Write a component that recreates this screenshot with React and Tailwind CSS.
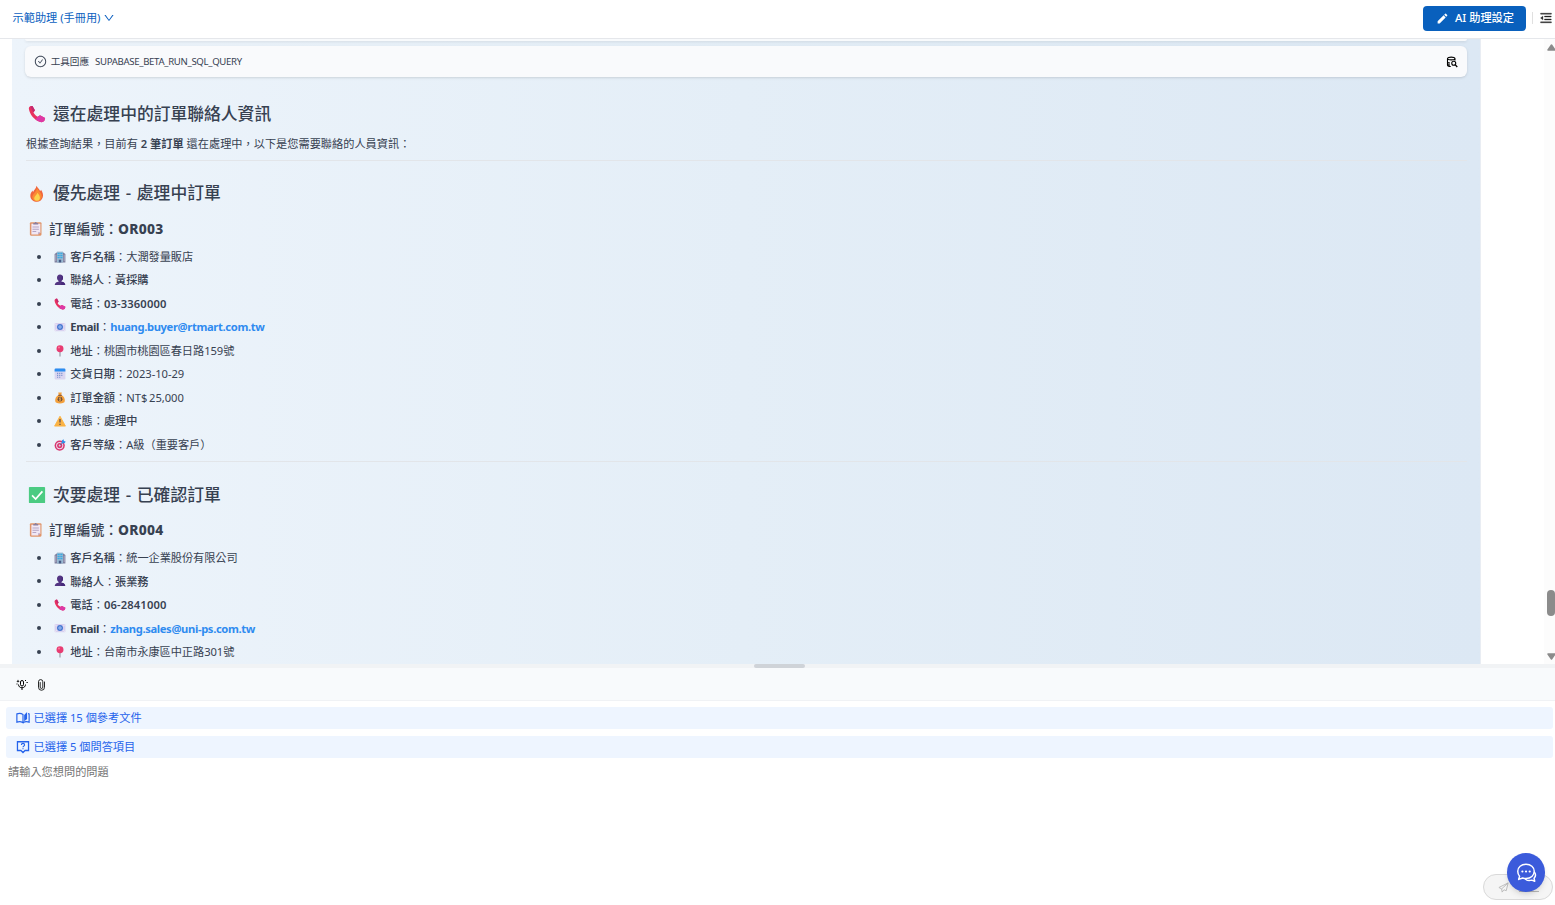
import React from 'react';
import { AiOutlineCheckCircle, AiOutlineDown, AiOutlineMenuFold } from 'react-icons/ai';
import { MdEdit } from 'react-icons/md';

const orders = [
  {
    icon: 'fire',
    title: '優先處理 - 處理中訂單',
    number: 'OR003',
    rows: [
      { icon: 'building', label: '客戶名稱', value: '大潤發量販店' },
      { icon: 'person', label: '聯絡人', value: '黃採購', strong: true },
      { icon: 'phone', label: '電話', phone: '03-3360000' },
      { icon: 'email', label: 'Email', link: 'huang.buyer@rtmart.com.tw' },
      { icon: 'pin', label: '地址', value: '桃園市桃園區春日路159號' },
      { icon: 'calendar', label: '交貨日期', value: '2023-10-29' },
      { icon: 'money', label: '訂單金額', value: 'NT$ 25,000' },
      { icon: 'warning', label: '狀態', value: '處理中', strong: true },
      { icon: 'target', label: '客戶等級', value: 'A級（重要客戶）' },
    ],
  },
  {
    icon: 'check',
    title: '次要處理 - 已確認訂單',
    number: 'OR004',
    rows: [
      { icon: 'building', label: '客戶名稱', value: '統一企業股份有限公司' },
      { icon: 'person', label: '聯絡人', value: '張業務', strong: true },
      { icon: 'phone', label: '電話', phone: '06-2841000' },
      { icon: 'email', label: 'Email', link: 'zhang.sales@uni-ps.com.tw' },
      { icon: 'pin', label: '地址', value: '台南市永康區中正路301號' },
    ],
  },
];

const emojiShapes = {
  phone: (
    <>
      <path
        d="M2.500 1.500 5 1l2.700 4.800-1.700 2.400c1.200 2.200 2.700 3.700 4.900 4.800l2.400-1.500 5.700 3-.8 3c-1.200 1.500-3.200 1.900-5.200 1.200C6.800 16.500 2 10.800 1 4.500c-.2-1.400.4-2.500 1.500-3z"
        fill="#e8315f"
      />
      <path d="m10.900 13 2.400-1.500 5.700 3-.8 3c-1.200 1.500-3.200 1.900-5.200 1.200-1.700-.6-3.300-1.500-4.700-2.600z" fill="#dd38a6" />
      <path d="M2.500 1.500 5 1l2.700 4.800L6 8.200z" fill="#c22a72" />
    </>
  ),
  fire: (
    <>
      <path d="M9.500.800c1 2.600 3.300 3.800 4 6.200l1-1.600c2 3 2.800 6 1.800 8.600-1 3-3.600 4.700-6.400 4.700-3.800 0-7-2.500-7.300-6.300-.2-2.800 1-4.700 2.600-6.400l.3 2C6.500 5.500 9 4 9.500.800z" fill="#f0653c" />
      <path d="M10 3c.5 2.500 5.500 6 5.300 9.700-.3 3.400-2.500 5.300-5.500 5.300-2.800 0-5.300-2-5-5.200C5.200 10 9.600 7.500 10 3z" fill="#fb8b34" />
      <path d="M10.500 8.500c1.800 2.300 3 4 2.700 6.200-.3 2-1.700 2.900-3.500 2.800-1.800 0-3-1.300-2.800-3.100.2-2.300 2.900-3.200 3.600-5.900z" fill="#fcd34d" />
    </>
  ),
  check: (
    <>
      <rect x="1" y="1" width="18" height="18" rx="1" fill="#4bcb82" />
      <path d="m4.500 10.500 4 4 7.500-8.500" fill="none" stroke="#fff" strokeWidth="1.900" />
    </>
  ),
  clipboard: (
    <>
      <rect x="2.500" y="1.500" width="15.500" height="18" rx="1.500" fill="#e0956b" />
      <path d="M4.500 3.500h12v11.500l-3 3h-9z" fill="#f0e7f5" />
      <path d="M16.500 15h-3v3z" fill="#b9a4c6" />
      <path d="M7 4.500v-2h2a1.300 1.300 0 0 1 2.600 0h2v2z" fill="#8c7f9d" />
      <path d="M6 8h8.500M6 11h8.500M6 14h5" stroke="#a796ba" strokeWidth="1.100" />
    </>
  ),
  building: (
    <>
      <path d="M1 5 5 2h10l4 3v14H1z" fill="#7d7f9d" />
      <rect x="5" y="1" width="10" height="18" fill="#9ab9d2" />
      <path d="M7 3v10M10 3v10M13 3v10" stroke="#25a9e7" strokeWidth="2" strokeDasharray="2.200 1" />
      <path d="M3 6v11M17 6v11" stroke="#c2bdd2" strokeWidth="1.200" />
      <rect x="8" y="14.500" width="4" height="4.500" fill="#465b85" />
    </>
  ),
  person: (
    <>
      <path d="M10 1c3.200 0 5 2.200 5 5.300 0 2.600-1.200 4.200-2.600 5.200v1.300c4 .6 6.100 2 6.400 5.700H1.200c.3-3.700 2.400-5.100 6.400-5.700v-1.300C6.200 10.500 5 8.900 5 6.300 5 3.200 6.800 1 10 1z" fill="#533582" />
      <path d="M13 2c1.300 1 2 2.400 2 4.300 0 2.600-1.200 4.200-2.600 5.200v1.300c4 .6 6.100 2 6.400 5.700H12z" fill="#46297a" />
    </>
  ),
  email: (
    <>
      <rect x="1" y="3.500" width="18" height="13.500" rx="1" fill="#d8d1ef" />
      <path d="m1 4 9 7 9-7M1 17l7-7M19 17l-7-7" fill="none" stroke="#f2ecf9" strokeWidth="1.300" />
      <circle cx="10" cy="10" r="5" fill="#4777d1" />
      <circle cx="10" cy="10" r="2" fill="none" stroke="#bfdcff" strokeWidth="1.200" />
    </>
  ),
  pin: (
    <>
      <path d="M10 9v10" stroke="#8b8796" strokeWidth="1.700" />
      <circle cx="10" cy="6.300" r="5.800" fill="#e83c72" />
      <circle cx="8.300" cy="4.200" r="1.700" fill="#fb7a9c" />
    </>
  ),
  calendar: (
    <>
      <rect x="1" y="1" width="18" height="18" rx="2" fill="#d9d5f0" />
      <path d="M3 1h14a2 2 0 0 1 2 2v3H1V3a2 2 0 0 1 2-2z" fill="#2b8df0" />
      <path d="M5 9h10M5 12.200h10M5 15.400h7" stroke="#7f95cf" strokeWidth="1.900" strokeDasharray="2 1.500" />
    </>
  ),
  money: (
    <>
      <path d="M7 1h6l-1 4c4.500 2 6.500 6 6 10-.4 3-3 4-8 4s-7.600-1-8-4c-.5-4 1.500-8 6-10z" fill="#f3a03c" />
      <path d="M7 5.500h6" stroke="#80533a" strokeWidth="1.800" />
      <circle cx="10" cy="12" r="4" fill="#6f4b3b" />
      <path d="M11.700 10.300c-3-1-4 1-1.700 1.700s1.300 2.700-1.700 1.700M10 8.800v6.400" fill="none" stroke="#ffc152" strokeWidth="1" />
    </>
  ),
  warning: (
    <>
      <path d="M10 2 19 18.500H1z" fill="#fbb344" stroke="#fbb344" strokeWidth="1.500" strokeLinejoin="round" />
      <path d="M10 6.500v6M10 14.500v2" stroke="#433b57" strokeWidth="1.800" />
    </>
  ),
  target: (
    <>
      <circle cx="9.500" cy="11" r="8.500" fill="#d9366f" />
      <circle cx="9.500" cy="11" r="6" fill="#e9dff0" />
      <circle cx="9.500" cy="11" r="4.300" fill="#d9366f" />
      <circle cx="9.500" cy="11" r="1.700" fill="#f5e4ef" />
      <path d="m9.500 11 6-6" stroke="#49619b" strokeWidth="1.300" />
      <path d="m12.500 6.500 1-4.500 2.500-1.500.5 3 3 .5-1.500 2.500-4.500 1z" fill="#3190e8" />
    </>
  ),
};

const Emoji = ({ name, className }) => (
  <svg viewBox="0 0 20 20" className={`shrink-0 ${className}`}>
    {emojiShapes[name]}
  </svg>
);

const DatabaseSearchIcon = () => (
  <svg viewBox="0 0 24 24" className="h-3 w-3" fill="none" stroke="#000" strokeWidth="2.200">
    <path d="M3 5c0-1.700 3.300-2.800 7.500-2.800S18 3.300 18 5s-3.300 2.800-7.500 2.800S3 6.700 3 5zM3 5v13c0 1.700 2.500 3 6.500 3M18 5v4M3 11.500c0 1.500 2 2.300 5 2.500M3 16c0 1 2 2 5 2" />
    <circle cx="15.500" cy="14.500" r="4" />
    <path d="m18.300 17.300 4.200 4.700" strokeWidth="2.600" />
  </svg>
);

const VoiceIcon = () => (
  <svg viewBox="0 0 24 24" className="h-3 w-3" fill="none" stroke="#000" strokeWidth="2">
    <rect x="9" y="3" width="6" height="11" rx="3" />
    <path d="M5 11c0 4 3 6.500 7 6.500s7-2.500 7-6.500M12 17.500V22" />
    <path d="m4 1 1 2.300L7.300 4.300 5 5.300 4 7.600 3 5.300.7 4.300 3 3.300z" fill="#000" stroke="none" />
    <path d="M18 3h2M21 7h2.500M1 10h2" />
  </svg>
);

const ClipIcon = () => (
  <svg viewBox="0 0 14 24" className="h-3 w-[7px]" fill="none" stroke="#111" strokeWidth="1.800" strokeLinecap="round">
    <path d="M13 6v10.500a6 6 0 0 1-12 0V5.500a4.300 4.300 0 0 1 8.600 0v10.800a2.600 2.600 0 0 1-5.200 0V7" />
  </svg>
);

const BookIcon = () => (
  <svg viewBox="0 0 24 24" className="h-[14px] w-[14px]" fill="none" stroke="#2563eb" strokeWidth="2">
    <path d="M12 20c-3-2-7-2.300-10.500-1V5c4-1.300 7.500-1 10.500 1zM12 20c3-2 7-2.300 10.500-1V5l-2-.5" />
    <path d="m14 7 5-5.500v12l-5 4z" fill="#2563eb" stroke="none" />
  </svg>
);

const QuestionIcon = () => (
  <svg viewBox="0 0 24 24" className="h-[14px] w-[14px]" fill="none" stroke="#2563eb" strokeWidth="2.200">
    <path d="M2.500 3h19v15h-6L12 21.500 8.500 18h-6z" />
    <path d="M9.300 8.500c0-3.500 5.400-3.500 5.400 0 0 2-2.700 2-2.700 4M12 14v2" strokeWidth="2" />
  </svg>
);

const SendIcon = () => (
  <svg viewBox="0 0 24 24" className="h-[11px] w-[11px]" fill="none" stroke="#b8b8b8" strokeWidth="2" strokeLinejoin="round">
    <path d="M22 2 2 12l6 3 1 7 4-5 5 2zM8 15 22 2" />
  </svg>
);

const ChatIcon = () => (
  <svg viewBox="0 0 24 24" className="h-[22px] w-[22px]" fill="none" stroke="#fff" strokeWidth="1.600" strokeLinecap="round" strokeLinejoin="round">
    <path d="M12 2.500c5.200 0 9 3.100 9 7.700s-3.800 7.800-9 7.800c-1.300 0-2.500-.2-3.600-.6L4 19l1-3.500c-1.300-1.300-2-3.200-2-5.300 0-4.600 3.800-7.700 9-7.700z" />
    <path d="M21.500 11.500c1.200 2 1 4.500-.7 6.200l.7 3.300-3.200-1.200c-2.500.8-5.100.4-6.800-1" />
    <path d="M8 10.300h.1M12 10.300h.1M16 10.300h.1" strokeWidth="2.300" />
  </svg>
);

const RowValue = ({ row }) => {
  if (row.link) {
    return <a className="font-bold tracking-[-0.35px] text-[#2f8bf0]">{row.link}</a>;
  }
  if (row.phone) {
    return <span className="font-semibold tracking-[0.15px]">{row.phone}</span>;
  }
  return (
    <span className={`tracking-[-0.05px] [word-spacing:-1px] ${row.strong ? 'font-medium' : ''}`}>{row.value}</span>
  );
};

const OrderRow = ({ row }) => (
  <li className="flex h-[23.500px] items-center pl-3">
    <span className="h-1 w-1 shrink-0 rounded-full bg-[#374151]" />
    <Emoji name={row.icon} className="ml-[12.500px] mr-[4.800px] h-3 w-3" />
    <span className="whitespace-nowrap">
      <span className={row.link ? 'font-bold tracking-[-0.35px]' : 'font-medium'}>{row.label}</span>：
      <RowValue row={row} />
    </span>
  </li>
);

const OrderSection = ({ order }) => (
  <section>
    <hr className="mt-[5px] ml-px border-[#e2e5e9]" />
    <h2 className="mt-5 flex h-[25.500px] items-center pl-px text-[16.800px] font-medium [word-spacing:1.300px]">
      <Emoji name={order.icon} className="ml-[2px] mr-[7px] h-[18px] w-[18px]" />
      {order.title}
    </h2>
    <h3 className="mt-3 flex h-5 items-center pl-px text-[13.800px] font-medium">
      <Emoji name="clipboard" className="ml-[2px] mr-[6px] h-[15px] w-[15px]" />
      訂單編號：<span className="font-extrabold tracking-[0.300px]">{order.number}</span>
    </h3>
    <ul className="mt-[6.250px]">
      {order.rows.map((row) => (
        <OrderRow key={row.label} row={row} />
      ))}
    </ul>
  </section>
);

const App = () => {
  return (
    <div className="flex h-[905px] w-full flex-col overflow-hidden bg-white font-['Noto_Sans','Noto_Sans_CJK_TC',sans-serif] text-[11.200px] leading-none text-[#374151]">
      <header className="flex h-[39px] shrink-0 items-center border-b border-[#e5e7eb] pb-[2px] pl-[12.500px]">
        <button className="flex items-center gap-[3px] text-[#0b5fc0]">
          <span>示範助理 (手冊用)</span>
          <AiOutlineDown className="h-3 w-3" />
        </button>
        <button className="ml-auto flex h-[25px] w-[103px] items-center rounded-[4px] bg-[#0960bd] pl-[13px] font-medium text-white">
          <MdEdit className="mr-[6px] h-[13px] w-[13px]" />
          AI 助理設定
        </button>
        <span className="ml-[6px] h-3 w-px bg-[#e0e0e0]" />
        <AiOutlineMenuFold stroke="currentColor" strokeWidth="24" className="ml-[6px] mr-[2px] h-[14px] w-[14px] text-[#222]" />
      </header>

      <main className="flex h-[625px] shrink-0 overflow-hidden">
        <div className="ml-3 w-[1468.500px] shrink-0 overflow-hidden border-r border-[#e9edf3] bg-linear-to-r from-[#edf4fb] via-[#e4eef7] to-[#dce8f4] px-[13px]">
          <div className="h-[2px] rounded-b-md bg-[#f8fafc] shadow-sm" />
          <div className="mt-[5px] flex h-[31px] items-center rounded-md bg-[#f9fafc] pl-[8.700px] pr-[9px] text-[9.600px] shadow-sm">
            <AiOutlineCheckCircle className="mr-1 h-[13px] w-[13px]" />
            <span>工具回應</span>
            <span className="ml-[6px] tracking-[-0.32px]">SUPABASE_BETA_RUN_SQL_QUERY</span>
            <span className="ml-auto">
              <DatabaseSearchIcon />
            </span>
          </div>
          <h2 className="mt-[22.500px] flex h-[29px] items-center pl-px text-[16.800px] font-medium">
            <Emoji name="phone" className="ml-[2px] mr-[7px] h-[18px] w-[18px]" />
            還在處理中的訂單聯絡人資訊
          </h2>
          <p className="mt-[4.500px] flex h-[22px] items-center whitespace-pre pl-px">
            根據查詢結果，目前有 <strong className="font-semibold">2 筆訂單</strong> 還在處理中，以下是您需要聯絡的人員資訊：
          </p>
          {orders.map((order) => (
            <OrderSection key={order.number} order={order} />
          ))}
        </div>
        <div className="ml-auto flex w-[11px] flex-col overflow-hidden bg-[#fcfcfc] pl-[3px] pt-[5px]">
          <svg viewBox="0 0 9 7" className="h-[7px] w-[9px] shrink-0">
            <path d="M4.500 1 8 6H1z" fill="#8b8b8b" stroke="#8b8b8b" strokeWidth="1.500" strokeLinejoin="round" />
          </svg>
          <span className="mt-[539px] h-[26px] w-[8px] shrink-0 rounded-[4px] bg-[#8b8b8b]" />
          <svg viewBox="0 0 9 7" className="mt-[37px] h-[7px] w-[9px] shrink-0">
            <path d="M4.500 6 8 1H1z" fill="#8b8b8b" stroke="#8b8b8b" strokeWidth="1.500" strokeLinejoin="round" />
          </svg>
        </div>
      </main>

      <div className="flex h-1 shrink-0 justify-center bg-[#f1f3f5]">
        <span className="ml-[4px] h-1 w-[51px] rounded-sm bg-[#cfd3d8]" />
      </div>

      <div className="flex h-[33px] shrink-0 items-center gap-[10px] border-b border-[#f0f2f5] bg-[#f8fafc] pl-4 pt-px">
        <VoiceIcon />
        <ClipIcon />
      </div>

      <div className="flex flex-col gap-[7px] pl-[6px] pr-[2px] pt-[6px] text-[#2563eb]">
        <div className="flex h-[22px] items-center gap-[3.500px] rounded-[3px] bg-[#eef5ff] pl-[10px]">
          <BookIcon />
          已選擇 15 個參考文件
        </div>
        <div className="flex h-[22px] items-center gap-[3.500px] rounded-[3px] bg-[#eef5ff] pl-[10px]">
          <QuestionIcon />
          已選擇 5 個問答項目
        </div>
      </div>

      <textarea
        className="mt-[6px] w-full flex-1 resize-none pl-2 pt-[2px] text-[11.200px] leading-[12px] outline-none placeholder:text-[#757575]"
        placeholder="請輸入您想問的問題"
      />

      <div className="absolute left-[1483px] top-[874px] flex h-[26px] w-[70px] items-center rounded-full border border-[#d9d9d9] bg-[#f5f5f5] pl-[14px]">
        <SendIcon />
        <span className="ml-[10px] mt-[9px] h-px w-5 bg-[#b8b8b8]" />
      </div>
      <button className="absolute left-[1507px] top-[853px] flex h-[39px] w-[38px] items-center justify-center rounded-full bg-[#3b5bdb] shadow-md">
        <ChatIcon />
      </button>
    </div>
  );
};

export default App;
